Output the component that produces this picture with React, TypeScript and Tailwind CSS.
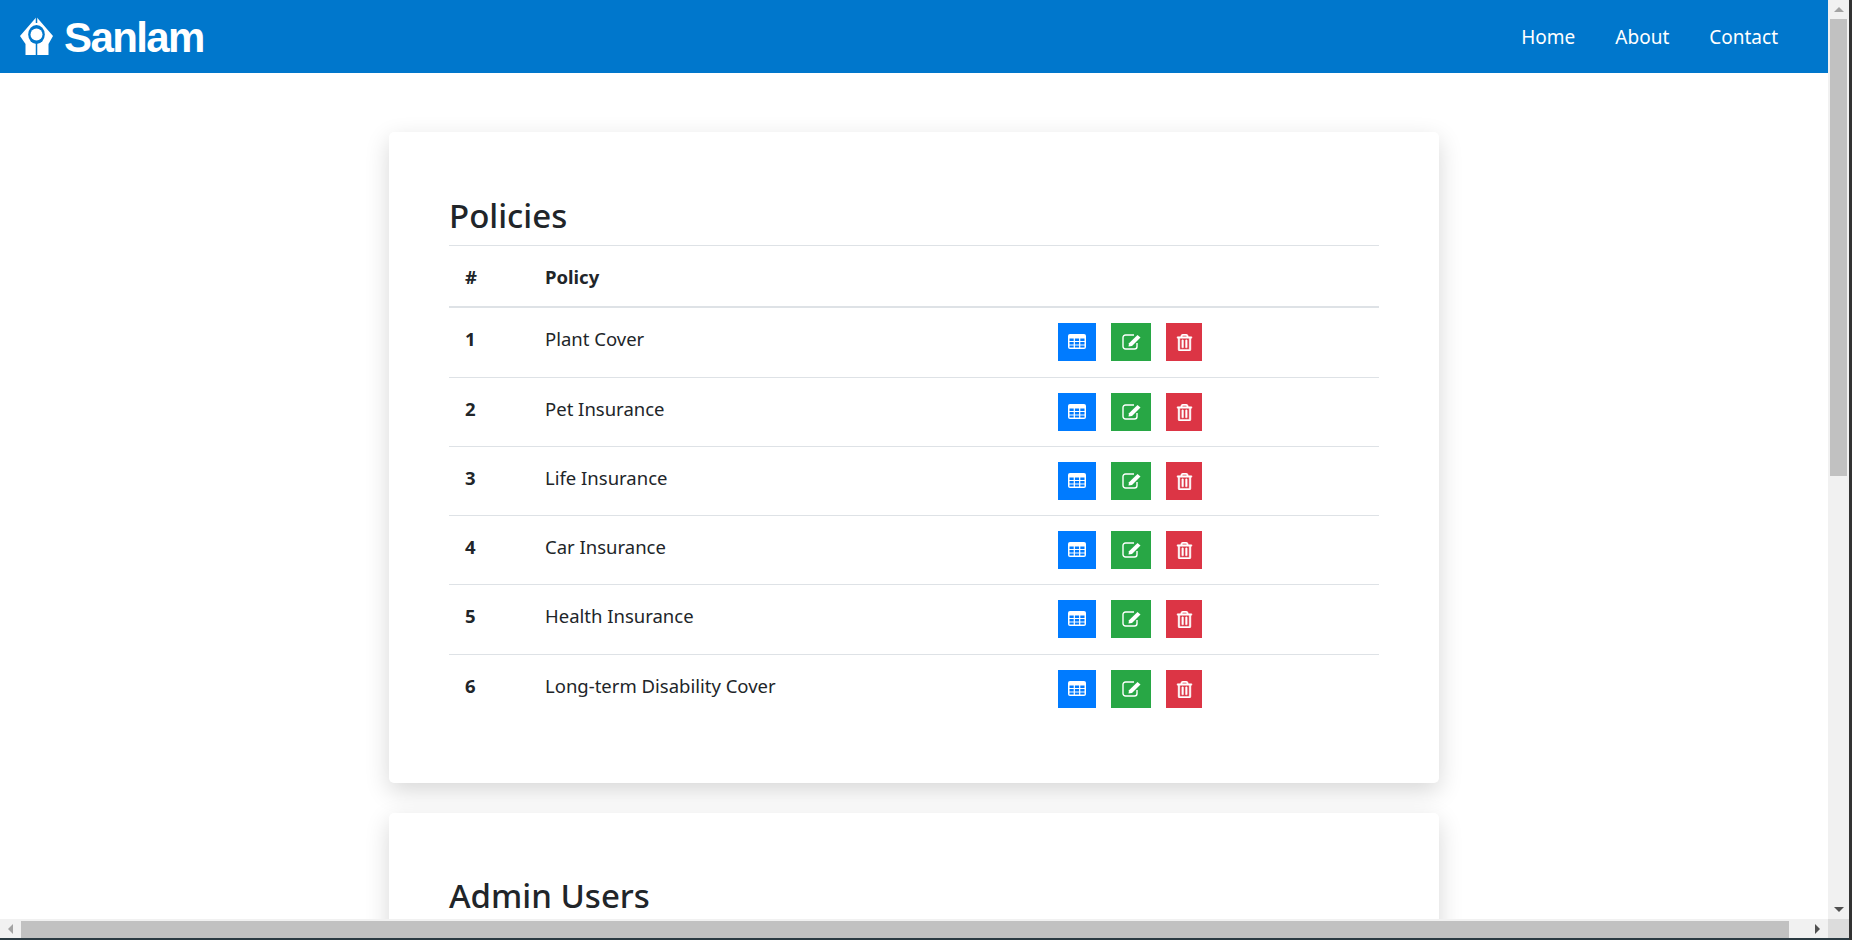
import { FaRegTrashAlt } from 'react-icons/fa';

const policies = [
  { id: 1, name: 'Plant Cover', height: 'h-[70px]' },
  { id: 2, name: 'Pet Insurance', height: 'h-[69px]' },
  { id: 3, name: 'Life Insurance', height: 'h-[69px]' },
  { id: 4, name: 'Car Insurance', height: 'h-[69px]' },
  { id: 5, name: 'Health Insurance', height: 'h-[70px]' },
  { id: 6, name: 'Long-term Disability Cover', height: 'h-[69px]' },
];

function Logo() {
  return (
    <div className="flex items-center gap-[11px]">
      <svg width="33" height="39" viewBox="0 0 33 39">
        <path d="M16.5 0 L20 4 L33 19 L28.5 27 L28.5 38 L5.5 38 L5.5 27 L0 19 L13 4 Z" fill="#fff" />
        <ellipse cx="16.5" cy="17.5" rx="8.3" ry="9.5" fill="#0077cc" />
        <circle cx="16.5" cy="17.5" r="6" fill="#fff" />
        <path d="M16.5 0 V6 M16.5 26 V39" stroke="#0077cc" strokeWidth="1.5" />
      </svg>
      <span className="pt-[3px] font-['Liberation_Sans',sans-serif] text-[42px] leading-none font-bold tracking-[-1.6px] text-white">Sanlam</span>
    </div>
  );
}

function TableIcon() {
  return (
    <svg width="18" height="15" viewBox="0 0 18 15" className="mb-[1px]">
      <rect width="18" height="15" rx="2" fill="#fff" />
      <path d="M1.5 4.5h4.2v2.4H1.5z M6.9 4.5h4.2v2.4H6.9z M12.3 4.5h4.2v2.4h-4.2z M1.5 8h4.2v2.4H1.5z M6.9 8h4.2v2.4H6.9z M12.3 8h4.2v2.4h-4.2z M1.5 11.4h4.2v2.1H1.5z M6.9 11.4h4.2v2.1H6.9z M12.3 11.4h4.2v2.1h-4.2z" fill="#007bff" />
    </svg>
  );
}

function EditIcon() {
  return (
    <svg width="19" height="16" viewBox="0 0 19 16">
      <path d="M12 1H3.5A2.5 2.5 0 0 0 1 3.5v9A2.5 2.5 0 0 0 3.5 15h9a2.5 2.5 0 0 0 2.5-2.5V9" fill="none" stroke="#fff" strokeWidth="1.4" />
      <path d="M15.5 1 L18.5 3.6 L10 12 L6.5 12.6 L7 9.2 Z" fill="#fff" />
    </svg>
  );
}

function PolicyRow({ id, name, height }: { id: number; name: string; height: string }) {
  return (
    <div className={`flex border-b border-[#dee2e6] last:border-b-0 ${height}`}>
      <div className="w-[96px] pt-[17px] pl-[16px] font-bold">{id}</div>
      <div className="w-[513px] pt-[17px]">{name}</div>
      <div className="flex gap-[15px] pt-[15px]">
        <button className="flex h-[38px] w-[38px] items-center justify-center bg-[#007bff]">
          <TableIcon />
        </button>
        <button className="flex h-[38px] w-[40px] items-center justify-center bg-[#28a745]">
          <EditIcon />
        </button>
        <button className="flex h-[38px] w-[36px] items-center justify-center bg-[#dc3545] text-white">
          <FaRegTrashAlt size={17} stroke="currentColor" strokeWidth={14} />
        </button>
      </div>
    </div>
  );
}

export default function App() {
  return (
    <div className="flex h-[940px] w-[1852px] overflow-hidden bg-white font-['Noto_Sans',sans-serif] text-[18.5px] text-[#212529]">
      <div className="flex w-[1849px] shrink-0 flex-col">
        <div className="flex min-h-0 flex-1">
          <div className="min-w-0 flex-1 overflow-hidden">
            <nav className="flex h-[73px] items-center justify-between bg-[#0077cc] pr-[50px] pl-[20px]">
              <Logo />
              <div className="flex gap-[40px] pt-[2px] text-[19px] text-white">
                <a>Home</a>
                <a>About</a>
                <a>Contact</a>
              </div>
            </nav>
            <main className="flex flex-col items-center gap-[30px] pt-[59px]">
              <section className="h-[651px] w-[1050px] rounded-[5px] bg-white px-[60px] pt-[50px] shadow-[0_8px_24px_rgba(0,0,0,0.16)]">
                <h2 className="h-[63px] pt-[2px] text-[33px] leading-[63px] font-medium">Policies</h2>
                <div className="flex h-[63px] items-center border-y border-b-2 border-[#dee2e6] pt-[1px] font-bold">
                  <div className="w-[96px] pl-[16px]">#</div>
                  <div>Policy</div>
                </div>
                {policies.map(policy => (
                  <PolicyRow key={policy.id} {...policy} />
                ))}
              </section>
              <section className="h-[300px] w-[1050px] shrink-0 rounded-[5px] bg-white px-[60px] pt-[50px] shadow-[0_8px_24px_rgba(0,0,0,0.16)]">
                <h2 className="pt-[1px] text-[33px] leading-[63px] font-medium">Admin Users</h2>
              </section>
            </main>
          </div>
          <div className="flex w-[21px] shrink-0 flex-col items-center bg-[#f1f1f1]">
            <div className="flex h-[19px] items-center justify-center">
              <div className="h-0 w-0 border-x-[5px] border-b-[5px] border-x-transparent border-b-[#a3a3a3]" />
            </div>
            <div className="h-[457px] w-[17px] bg-[#c1c1c1]" />
            <div className="flex-1" />
            <div className="flex h-[19px] items-center justify-center">
              <div className="h-0 w-0 border-x-[5px] border-t-[5px] border-x-transparent border-t-[#505050]" />
            </div>
          </div>
        </div>
        <div className="flex h-[19px] shrink-0 items-center bg-[#f1f1f1]">
          <div className="flex w-[21px] justify-center">
            <div className="h-0 w-0 border-y-[5px] border-r-[5px] border-y-transparent border-r-[#a3a3a3]" />
          </div>
          <div className="h-[17px] w-[1768px] self-end bg-[#c1c1c1]" />
          <div className="flex flex-1 justify-end pr-[8px]">
            <div className="h-0 w-0 border-y-[5px] border-l-[5px] border-y-transparent border-l-[#505050]" />
          </div>
          <div className="h-full w-[21px] bg-[#dcdcdc]" />
        </div>
        <div className="h-[2px] shrink-0 bg-[#2b3a42]" />
      </div>
      <div className="w-[3px] shrink-0 bg-[#333333]" />
    </div>
  );
}
